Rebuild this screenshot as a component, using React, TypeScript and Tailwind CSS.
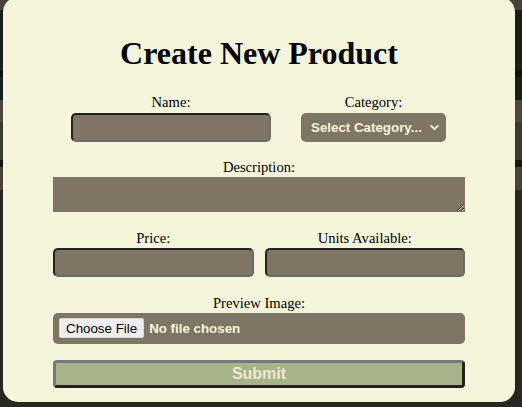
import { ChevronDown } from "lucide-react";

const bands = [
  "h-[10px] bg-[#4a4238]",
  "h-[60px] bg-[#1a1f1a]",
  "h-[7px] bg-[#0e1511]",
  "h-[23px] bg-[#15211a]",
  "h-[22px] bg-[#4f4539]",
  "h-[38px] bg-[#3a3c30]",
  "h-[7px] bg-[#161612]",
  "h-[23px] bg-[#4b4237]",
  "h-[217px] bg-[#2a2620]",
];

const inputCls =
  "h-[29px] rounded-[5px] border-2 border-t-[#222] border-l-[#222] border-b-[#6b6b6b] border-r-[#6b6b6b] bg-[#7f7565] outline-none";

function Label({ children }: { children: React.ReactNode }) {
  return <label className="mb-[2px] block text-center text-[14.6px] leading-[16px] text-black">{children}</label>;
}

export default function App() {
  return (
    <div className="relative h-[407px] w-[522px] overflow-hidden bg-[#2a2620]">
      <div className="flex flex-col">
        {bands.map((b, i) => (
          <div key={i} className={b} />
        ))}
      </div>

      {/* modal */}
      <div className="absolute left-[3px] top-[-3px] h-[405px] w-[512px] rounded-[15px] bg-[#f5f5dc] px-[50px] pt-[38px] font-['Liberation_Serif',serif]">
        <h1 className="mb-[22px] text-center text-[32px] font-bold leading-[37px] text-black">Create New Product</h1>

        <form className="flex flex-col" onSubmit={(e) => e.preventDefault()}>
          <div className="flex justify-between pl-[18px] pr-[19px]">
            <div className="flex flex-col items-center">
              <span className="mb-[3px] block text-center text-[14.6px] leading-[16px] text-black">Name:</span>
              <input type="text" className={`${inputCls} w-[200px]`} />
            </div>
            <div className="flex flex-col items-center">
              <span className="mb-[3px] block text-center text-[14.6px] leading-[16px] text-black">Category:</span>
              <div className="relative">
                <select className="h-[29px] w-[145px] appearance-none rounded-[5px] bg-[#7f7565] pl-[10px] font-['Liberation_Sans',Arial,sans-serif] text-[13.33px] font-bold text-[#f5f5dc] outline-none">
                  <option>Select Category...</option>
                </select>
                <ChevronDown
                  size={13}
                  strokeWidth={3.5}
                  className="pointer-events-none absolute right-[5px] top-[8px] text-[#f5f5dc]"
                />
              </div>
            </div>
          </div>

          <div className="mt-[17px] flex flex-col">
            <Label>Description:</Label>
            <textarea className="block h-[35px] w-full resize-y bg-[#7f7565] outline-none" />
          </div>

          <div className="mt-[18px] flex gap-[11px]">
            <div className="flex flex-1 flex-col">
              <Label>Price:</Label>
              <input type="number" className={`${inputCls} w-full`} />
            </div>
            <div className="flex flex-1 flex-col">
              <Label>Units Available:</Label>
              <input type="number" className={`${inputCls} w-full`} />
            </div>
          </div>

          <div className="mt-[18px] flex flex-col">
            <Label>Preview Image:</Label>
            <div className="flex h-[31px] items-center rounded-[5px] bg-[#7f7565] px-[6px]">
              <input
                type="file"
                className="font-['Liberation_Sans',Arial,sans-serif] text-[13.33px] font-bold text-[#f5f5dc] file:mr-[5px] file:h-[20px] file:rounded-[2px] file:border file:border-[#d6d6d6] file:bg-[#efefef] file:px-[6px] file:font-normal file:text-black"
              />
            </div>
          </div>

          <button
            type="submit"
            className="mt-[16px] h-[28px] w-full rounded-[4px] border-[3px] border-t-[#777] border-l-[#777] border-b-[#222] border-r-[#222] bg-[#a8b38a] font-['Liberation_Sans',Arial,sans-serif] text-[16px] font-bold leading-none text-[#ece9cf]"
          >
            Submit
          </button>
        </form>
      </div>
    </div>
  );
}
